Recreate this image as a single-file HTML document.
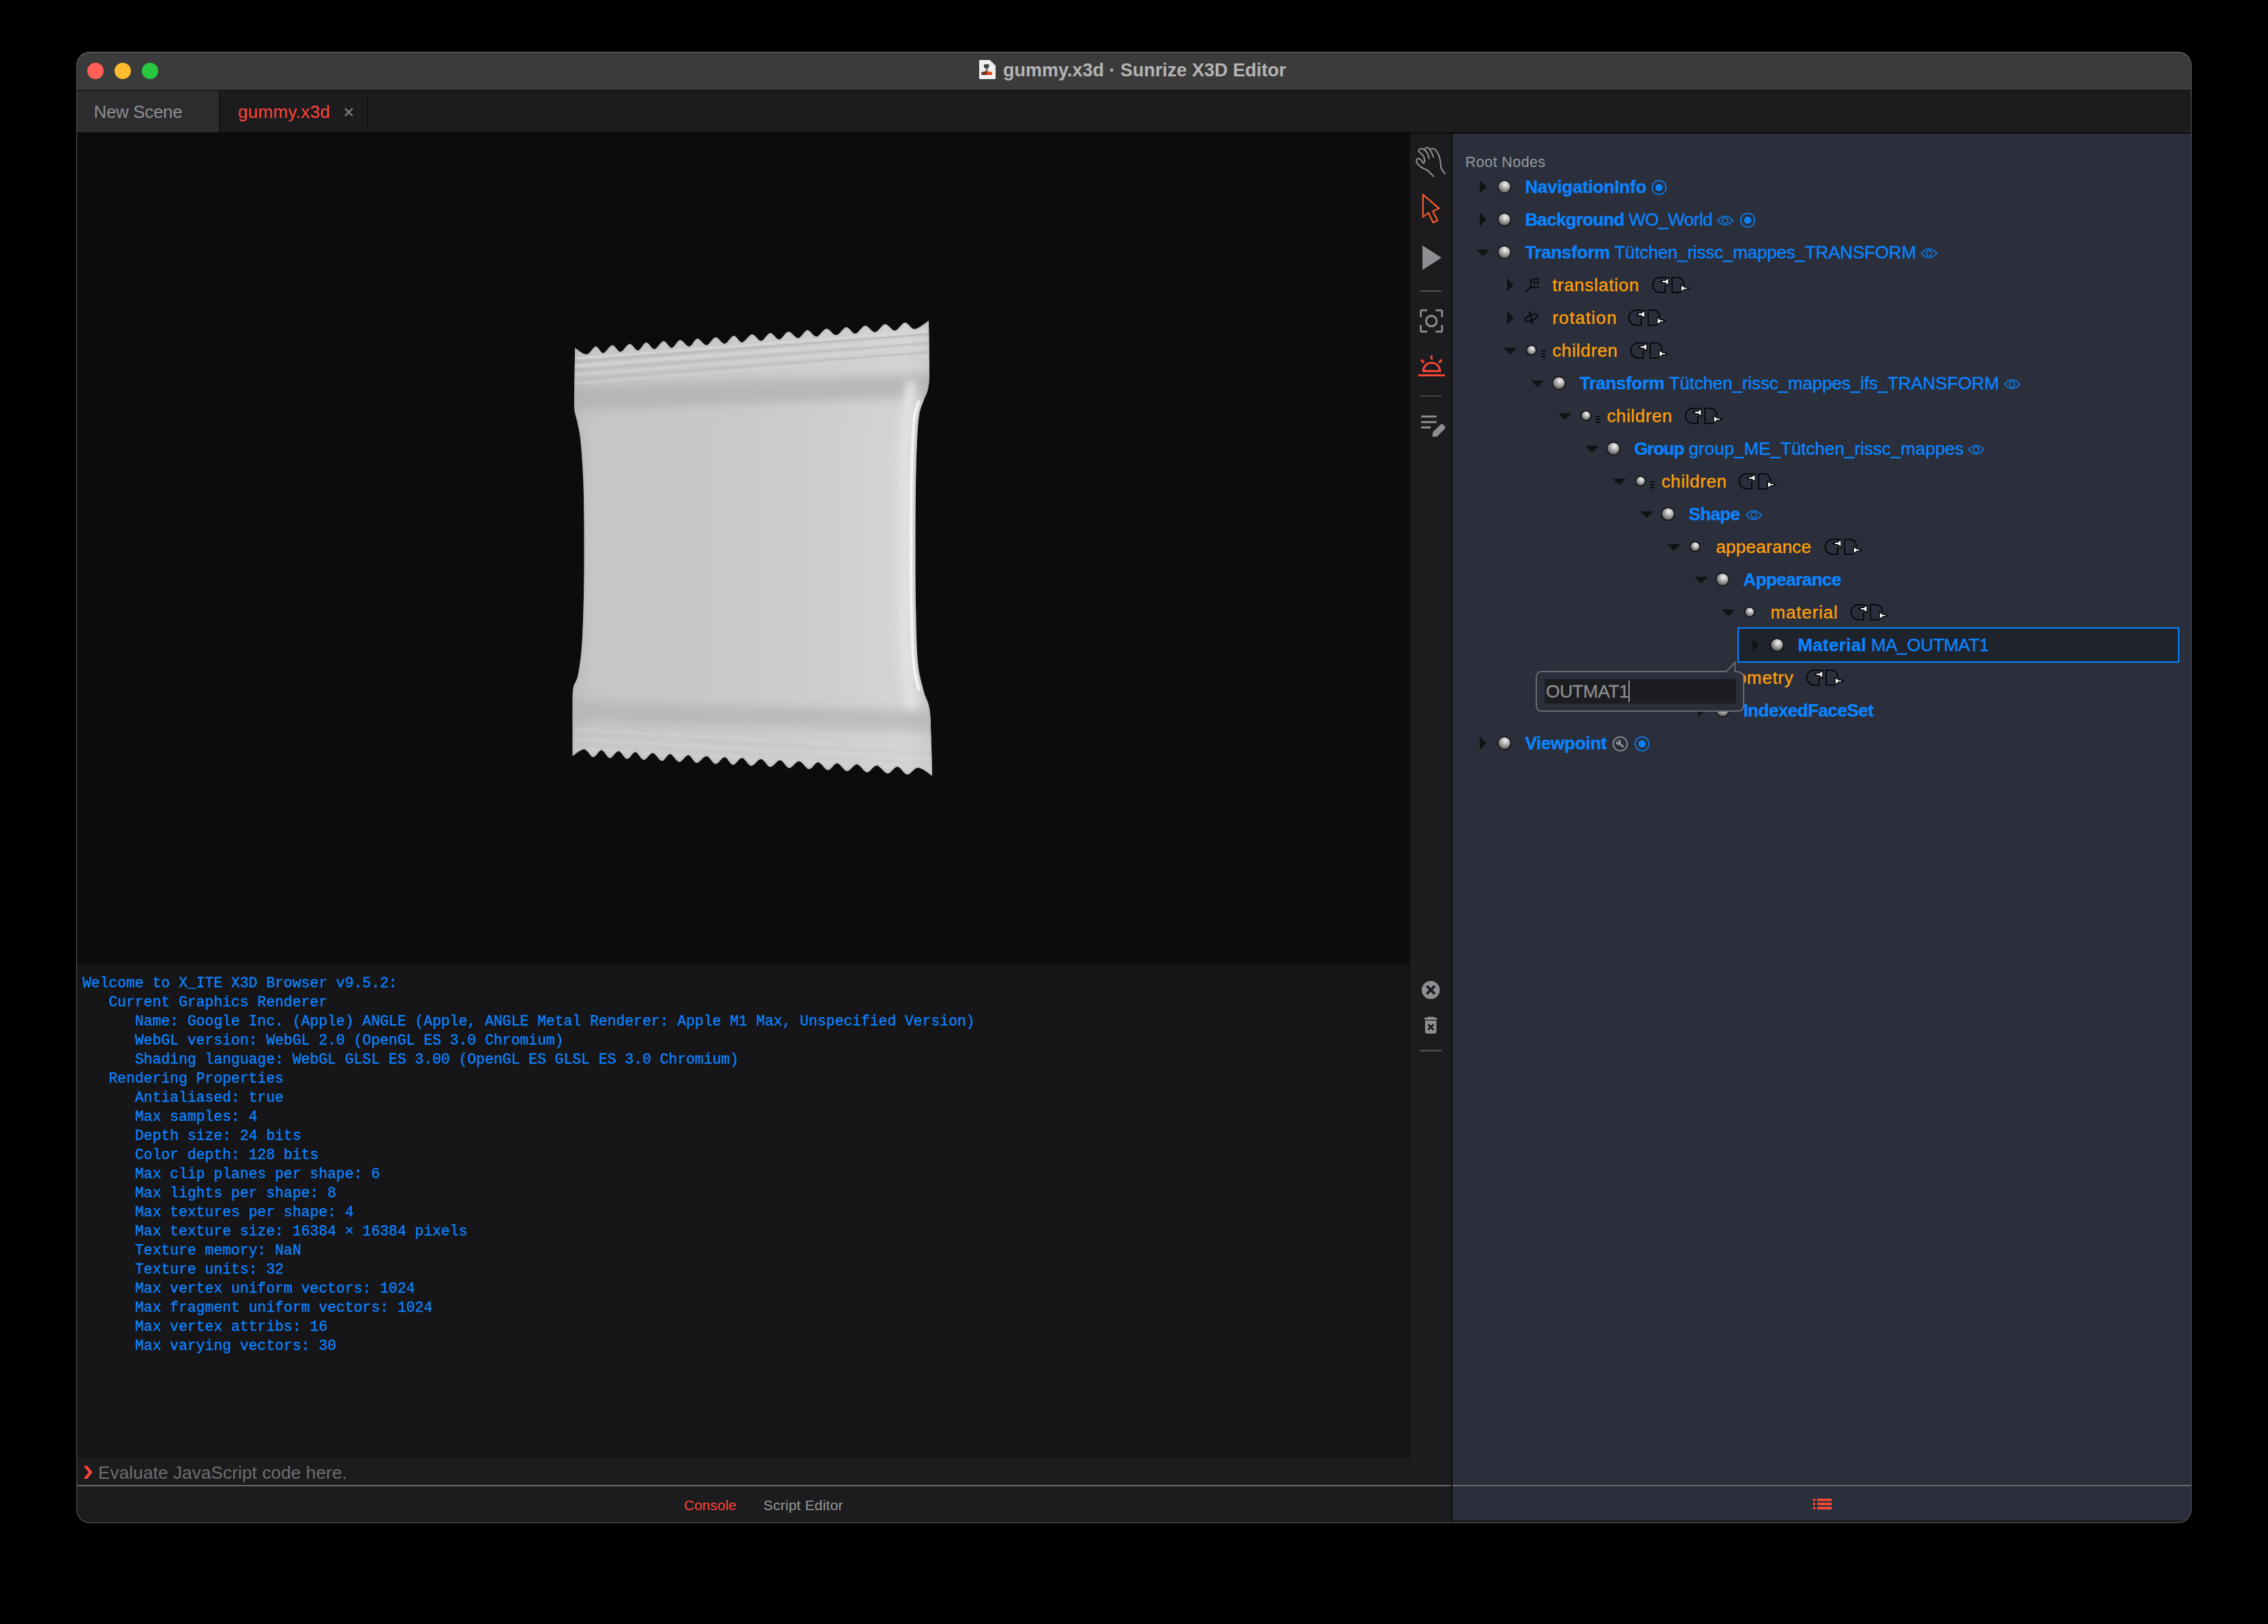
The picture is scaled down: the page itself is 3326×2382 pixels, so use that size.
<!DOCTYPE html><html><head><meta charset="utf-8"><style>
*{margin:0;padding:0;box-sizing:border-box}
html,body{width:3326px;height:2382px;background:#000;overflow:hidden}
body{position:relative;font-family:"Liberation Sans",sans-serif}
.a{position:absolute}
.t{position:absolute;white-space:pre;line-height:1;}
.row{position:absolute;height:48px;line-height:48px;white-space:pre;font-size:26px;-webkit-text-stroke:0.35px currentColor}
.b{font-weight:bold}
.mono{font-family:"Liberation Mono",monospace}
svg{position:absolute;overflow:visible}
</style></head><body><div class="a" style="left:112px;top:76px;width:3102px;height:2158px;border-radius:20px;background:#1c1c1e;overflow:hidden">
<div class="a" style="left:0;top:0;width:3102px;height:56px;background:#3b3b3b"></div>
<div class="a" style="left:0;top:56px;width:3102px;height:1px;background:#050505"></div>
<div class="a" style="left:16px;top:16px;width:24px;height:24px;border-radius:50%;background:#ff5f57"></div>
<div class="a" style="left:56px;top:16px;width:24px;height:24px;border-radius:50%;background:#febc2e"></div>
<div class="a" style="left:96px;top:16px;width:24px;height:24px;border-radius:50%;background:#28c840"></div>
<div class="t b" style="left:1359px;top:14px;font-size:27px;color:#b4b4b4;letter-spacing:0px">gummy.x3d · Sunrize X3D Editor</div>
<svg style="left:1324px;top:12px" width="24" height="28" viewBox="0 0 24 28">
<path d="M1.5 0 H15.6 L24 8.4 V26.5 Q24 28 22.5 28 H1.5 Q0 28 0 26.5 V1.5 Q0 0 1.5 0Z" fill="#f1f1f1"/>
<path d="M15.6 0 V8.4 H24Z" fill="#e6e6e6"/>
<path d="M7 7.2 Q7 6.2 8.5 6.2 H13 Q14.4 6.2 14.4 7.2 V11 L13 12 H8.3 L7 11Z" fill="#3c4141"/>
<rect x="9.2" y="11.5" width="3.8" height="5" fill="#8a8c84"/>
<path d="M3.2 17.7 L10.4 16.2 V21.9 H3.2Z" fill="#6a3420"/>
<path d="M10.4 16.2 L18.8 17.7 V21.9 H10.4Z" fill="#e2461c"/>
<rect x="10" y="16.2" width="0.8" height="5.7" fill="#3a2a20"/>
</svg>
<div class="a" style="left:0;top:57px;width:3102px;height:61px;background:#1c1c1e"></div>
<div class="a" style="left:0;top:57px;width:209px;height:61px;background:#2c2c2e"></div>
<div class="a" style="left:209px;top:57px;width:1px;height:61px;background:#0e0e0e"></div>
<div class="a" style="left:426px;top:57px;width:1px;height:61px;background:#0e0e0e"></div>
<div class="t" style="left:25.5px;top:74.5px;font-size:26px;color:#8e8e93;letter-spacing:-0.35px">New Scene</div>
<div class="t" style="left:237px;top:74.5px;font-size:26px;color:#ff453a;letter-spacing:0.3px">gummy.x3d</div>
<svg style="left:393px;top:82px" width="13" height="13" viewBox="0 0 13 13"><path d="M1 1L12 12M12 1L1 12" stroke="#7d7d7d" stroke-width="2.4"/></svg>
<div class="a" style="left:0;top:118px;width:3102px;height:2px;background:#0c0c0e"></div>
<div class="a" style="left:0;top:120px;width:1954px;height:1217px;background:#0c0c0c"></div>
<div class="a" style="left:0;top:1337px;width:1954px;height:1px;background:#1e1e20"></div>
<div class="a" style="left:0;top:1338px;width:1954px;height:2px;background:#0d0d0e"></div>
<div class="a" style="left:0;top:1340px;width:1954px;height:721px;background:#161618"></div>
<div class="a" style="left:1955px;top:120px;width:61px;height:1982px;background:#1c1c1e"></div>
<div class="a" style="left:1954px;top:120px;width:2px;height:1941px;background:#0f0f10"></div>
<div class="a" style="left:0;top:2060px;width:1955px;height:1px;background:#0f0f10"></div>
<div class="a" style="left:2016px;top:120px;width:2px;height:2036px;background:#0b0b0c"></div>
<div class="a" style="left:2018px;top:120px;width:1084px;height:2034px;background:#2a2f3b"></div>
<div class="a" style="left:0;top:2102px;width:2016px;height:2px;background:#6a6a6a"></div>
<div class="a" style="left:2018px;top:2102px;width:1084px;height:2px;background:#6a6a6a"></div>
<div class="t mono" style="left:9px;top:1351.5px;font-size:21.3px;line-height:28px;letter-spacing:0.05px;-webkit-text-stroke:0.3px currentColor;color:#0a84ff">Welcome to X_ITE X3D Browser v9.5.2:
   Current Graphics Renderer
      Name: Google Inc. (Apple) ANGLE (Apple, ANGLE Metal Renderer: Apple M1 Max, Unspecified Version)
      WebGL version: WebGL 2.0 (OpenGL ES 3.0 Chromium)
      Shading language: WebGL GLSL ES 3.00 (OpenGL ES GLSL ES 3.0 Chromium)
   Rendering Properties
      Antialiased: true
      Max samples: 4
      Depth size: 24 bits
      Color depth: 128 bits
      Max clip planes per shape: 6
      Max lights per shape: 8
      Max textures per shape: 4
      Max texture size: 16384 × 16384 pixels
      Texture memory: NaN
      Texture units: 32
      Max vertex uniform vectors: 1024
      Max fragment uniform vectors: 1024
      Max vertex attribs: 16
      Max varying vectors: 30</div>
<svg style="left:10px;top:2074px" width="14" height="19" viewBox="0 0 14 19"><path d="M0.5 0H6L13.5 9.5L6 19H0.5L8 9.5Z" fill="#ff453a"/></svg>
<div class="t" style="left:32px;top:2071px;font-size:26px;color:#6e6e70;letter-spacing:0.17px">Evaluate JavaScript code here.</div>
<div class="t" style="left:891px;top:2120.5px;font-size:21px;color:#ff453a">Console</div>
<div class="t" style="left:1007.5px;top:2120.5px;letter-spacing:0.2px;font-size:21px;color:#98989d">Script Editor</div>
<svg style="left:2546px;top:2122px" width="30" height="18" viewBox="0 0 30 18">
<g fill="#ff4a3a"><rect x="0.8" y="0.2" width="3.3" height="3.5"/><rect x="0.8" y="6.2" width="3.3" height="3.5"/><rect x="0.8" y="12.1" width="3.3" height="3.8"/>
<rect x="6.8" y="0.2" width="21.3" height="3.5"/><rect x="6.8" y="6.2" width="21.3" height="3.5"/><rect x="6.8" y="12.1" width="21.3" height="3.8"/></g></svg>
<svg style="left:688px;top:364px" width="600" height="720" viewBox="0 0 600 720">
<defs>
<linearGradient id="bagH" x1="0" y1="0" x2="1" y2="0">
<stop offset="0" stop-color="#bdbdbd"/><stop offset="0.06" stop-color="#c6c6c6"/><stop offset="0.45" stop-color="#c9c9c9"/>
<stop offset="0.8" stop-color="#d1d1d1"/><stop offset="0.93" stop-color="#d6d6d6"/><stop offset="1" stop-color="#c8c8c8"/>
</linearGradient>
<linearGradient id="bagV" x1="0" y1="0" x2="0" y2="1">
<stop offset="0" stop-color="#d4d4d4" stop-opacity="0.5"/><stop offset="0.15" stop-color="#c8c8c8" stop-opacity="0.1"/>
<stop offset="0.3" stop-color="#c4c4c4" stop-opacity="0"/>
<stop offset="0.8" stop-color="#c4c4c4" stop-opacity="0"/>
<stop offset="0.92" stop-color="#d0d0d0" stop-opacity="0.3"/><stop offset="1" stop-color="#d4d4d4" stop-opacity="0.5"/>
</linearGradient>
<filter id="bl1" x="-10%" y="-200%" width="120%" height="500%"><feGaussianBlur stdDeviation="0.7"/></filter>
<filter id="bl6" x="-10%" y="-100%" width="120%" height="300%"><feGaussianBlur stdDeviation="7"/></filter>
<filter id="blh" x="-200%" y="-10%" width="500%" height="120%"><feGaussianBlur stdDeviation="1"/></filter>
<filter id="blb" x="-200%" y="-10%" width="500%" height="120%"><feGaussianBlur stdDeviation="6"/></filter>
<clipPath id="bagclip"><path d="M43.3,70.6 C43.3,70.6 40.5,69.1 43.3,70.6 C46.2,72.1 55.3,80.2 60.3,79.8 C65.4,79.4 69.6,68.6 73.6,68.3 C77.7,67.9 80.5,78.2 84.6,77.9 C88.6,77.6 93.7,66.7 97.9,66.4 C102.1,66.1 105.8,76.3 110.0,76.0 C114.3,75.6 119.1,64.8 123.4,64.4 C127.6,64.1 131.4,74.3 135.5,74.0 C139.5,73.7 143.6,62.9 147.6,62.6 C151.6,62.2 155.5,72.4 159.7,72.1 C164.0,71.8 168.8,60.9 173.1,60.6 C177.3,60.3 181.1,70.5 185.2,70.2 C189.2,69.8 193.1,59.1 197.3,58.7 C201.6,58.4 206.4,68.5 210.6,68.2 C214.9,67.9 218.5,57.1 222.8,56.8 C227.0,56.4 231.7,66.6 236.1,66.2 C240.6,65.9 245.0,55.0 249.4,54.7 C253.9,54.4 258.3,64.5 262.8,64.2 C267.2,63.8 271.9,53.0 276.1,52.6 C280.4,52.3 283.8,62.6 288.2,62.2 C292.7,61.9 298.1,50.9 302.8,50.6 C307.4,50.2 311.7,60.4 316.1,60.1 C320.6,59.7 325.0,48.9 329.5,48.5 C333.9,48.2 338.4,58.3 342.8,58.0 C347.2,57.7 351.5,46.8 356.1,46.5 C360.8,46.1 366.0,56.2 370.7,55.9 C375.3,55.5 379.6,44.7 384.0,44.3 C388.5,44.0 392.7,54.2 397.4,53.8 C402.0,53.4 407.1,42.5 411.9,42.2 C416.8,41.8 421.6,51.9 426.5,51.6 C431.3,51.2 436.4,40.3 441.0,39.9 C445.7,39.6 449.7,49.8 454.3,49.4 C459.0,49.0 464.0,38.2 468.9,37.8 C473.7,37.4 478.6,47.5 483.4,47.2 C488.3,46.8 493.1,35.9 498.0,35.5 C502.8,35.2 507.7,45.3 512.5,44.9 C517.4,44.5 522.2,33.7 527.1,33.3 C531.9,32.9 535.8,43.1 541.6,42.7 C547.5,42.2 558.6,32.6 562.0,30.6 C562.2,43.0 563.2,88.3 563.0,105.0 C562.8,121.7 562.3,123.5 560.9,130.6 C559.5,137.7 556.6,141.3 554.5,147.7 C552.4,154.1 549.6,158.4 548.0,169.0 C546.4,179.6 545.5,193.8 544.7,211.5 C543.9,229.2 543.4,250.2 543.0,275.0 C542.6,299.8 542.5,331.6 542.5,360.0 C542.5,388.4 542.4,417.1 543.0,445.5 C543.6,473.9 544.1,509.4 546.0,530.6 C547.9,551.9 551.7,561.6 554.5,573.0 C557.3,584.4 561.2,587.5 563.0,598.7 C564.8,609.9 564.8,623.5 565.5,640.0 C566.2,656.5 566.8,688.3 567.0,698.0 C567.0,698.0 570.4,700.0 567.0,698.0 C563.6,696.0 552.5,686.4 546.5,686.1 C540.4,685.7 535.8,696.3 530.7,696.0 C525.7,695.7 521.0,684.7 516.2,684.4 C511.3,684.1 506.7,694.7 501.6,694.4 C496.6,694.1 490.9,683.0 485.9,682.7 C480.8,682.4 476.2,693.0 471.3,692.7 C466.5,692.4 461.6,681.4 456.8,681.1 C451.9,680.8 447.1,691.4 442.2,691.1 C437.4,690.8 432.3,679.7 427.7,679.5 C423.0,679.2 419.0,689.8 414.3,689.5 C409.7,689.3 404.4,678.2 399.8,677.9 C395.1,677.7 391.1,688.3 386.5,688.0 C381.8,687.7 376.8,676.7 371.9,676.4 C367.1,676.1 362.0,686.6 357.4,686.4 C352.7,686.1 348.7,675.1 344.0,674.9 C339.4,674.6 334.1,685.1 329.5,684.8 C324.8,684.6 320.8,673.6 316.1,673.3 C311.5,673.1 306.2,683.6 301.6,683.3 C296.9,683.0 292.7,672.0 288.2,671.8 C283.8,671.5 279.2,682.1 274.9,681.8 C270.7,681.6 267.0,670.6 262.8,670.4 C258.5,670.1 253.9,680.7 249.4,680.4 C245.0,680.2 240.8,669.1 236.1,668.9 C231.5,668.6 226.0,679.1 221.6,678.9 C217.1,678.6 213.7,667.6 209.4,667.4 C205.2,667.2 200.5,677.7 196.1,677.5 C191.7,677.2 187.0,666.2 182.8,665.9 C178.5,665.7 174.9,676.3 170.6,676.1 C166.4,675.8 161.7,664.8 157.3,664.5 C152.9,664.3 148.2,674.8 144.0,674.6 C139.7,674.3 135.9,663.3 131.8,663.1 C127.8,662.9 123.8,673.5 119.7,673.2 C115.6,673.0 111.4,662.0 107.1,661.7 C102.9,661.5 98.4,672.1 94.3,671.8 C90.1,671.6 86.2,660.6 82.1,660.3 C78.1,660.1 74.3,670.7 70.0,670.5 C65.8,670.2 61.7,659.2 56.7,658.9 C51.6,658.7 42.5,667.2 39.7,668.8 C39.7,657.5 39.6,617.5 39.7,601.0 C39.8,584.5 39.2,578.2 40.5,569.7 C41.8,561.2 45.4,561.1 47.6,550.0 C49.8,538.9 52.1,523.8 53.5,502.8 C54.9,481.8 55.7,450.3 56.2,424.0 C56.7,397.7 56.7,371.2 56.6,345.0 C56.5,318.8 56.2,289.4 55.4,266.5 C54.5,243.6 52.9,221.9 51.5,207.5 C50.1,193.1 48.3,187.9 46.8,180.0 C45.3,172.1 43.1,168.5 42.4,160.0 C41.7,151.5 42.2,143.6 42.4,128.7 C42.5,113.8 43.1,80.3 43.3,70.6Z"/></clipPath>
</defs>
<path d="M43.3,70.6 C43.3,70.6 40.5,69.1 43.3,70.6 C46.2,72.1 55.3,80.2 60.3,79.8 C65.4,79.4 69.6,68.6 73.6,68.3 C77.7,67.9 80.5,78.2 84.6,77.9 C88.6,77.6 93.7,66.7 97.9,66.4 C102.1,66.1 105.8,76.3 110.0,76.0 C114.3,75.6 119.1,64.8 123.4,64.4 C127.6,64.1 131.4,74.3 135.5,74.0 C139.5,73.7 143.6,62.9 147.6,62.6 C151.6,62.2 155.5,72.4 159.7,72.1 C164.0,71.8 168.8,60.9 173.1,60.6 C177.3,60.3 181.1,70.5 185.2,70.2 C189.2,69.8 193.1,59.1 197.3,58.7 C201.6,58.4 206.4,68.5 210.6,68.2 C214.9,67.9 218.5,57.1 222.8,56.8 C227.0,56.4 231.7,66.6 236.1,66.2 C240.6,65.9 245.0,55.0 249.4,54.7 C253.9,54.4 258.3,64.5 262.8,64.2 C267.2,63.8 271.9,53.0 276.1,52.6 C280.4,52.3 283.8,62.6 288.2,62.2 C292.7,61.9 298.1,50.9 302.8,50.6 C307.4,50.2 311.7,60.4 316.1,60.1 C320.6,59.7 325.0,48.9 329.5,48.5 C333.9,48.2 338.4,58.3 342.8,58.0 C347.2,57.7 351.5,46.8 356.1,46.5 C360.8,46.1 366.0,56.2 370.7,55.9 C375.3,55.5 379.6,44.7 384.0,44.3 C388.5,44.0 392.7,54.2 397.4,53.8 C402.0,53.4 407.1,42.5 411.9,42.2 C416.8,41.8 421.6,51.9 426.5,51.6 C431.3,51.2 436.4,40.3 441.0,39.9 C445.7,39.6 449.7,49.8 454.3,49.4 C459.0,49.0 464.0,38.2 468.9,37.8 C473.7,37.4 478.6,47.5 483.4,47.2 C488.3,46.8 493.1,35.9 498.0,35.5 C502.8,35.2 507.7,45.3 512.5,44.9 C517.4,44.5 522.2,33.7 527.1,33.3 C531.9,32.9 535.8,43.1 541.6,42.7 C547.5,42.2 558.6,32.6 562.0,30.6 C562.2,43.0 563.2,88.3 563.0,105.0 C562.8,121.7 562.3,123.5 560.9,130.6 C559.5,137.7 556.6,141.3 554.5,147.7 C552.4,154.1 549.6,158.4 548.0,169.0 C546.4,179.6 545.5,193.8 544.7,211.5 C543.9,229.2 543.4,250.2 543.0,275.0 C542.6,299.8 542.5,331.6 542.5,360.0 C542.5,388.4 542.4,417.1 543.0,445.5 C543.6,473.9 544.1,509.4 546.0,530.6 C547.9,551.9 551.7,561.6 554.5,573.0 C557.3,584.4 561.2,587.5 563.0,598.7 C564.8,609.9 564.8,623.5 565.5,640.0 C566.2,656.5 566.8,688.3 567.0,698.0 C567.0,698.0 570.4,700.0 567.0,698.0 C563.6,696.0 552.5,686.4 546.5,686.1 C540.4,685.7 535.8,696.3 530.7,696.0 C525.7,695.7 521.0,684.7 516.2,684.4 C511.3,684.1 506.7,694.7 501.6,694.4 C496.6,694.1 490.9,683.0 485.9,682.7 C480.8,682.4 476.2,693.0 471.3,692.7 C466.5,692.4 461.6,681.4 456.8,681.1 C451.9,680.8 447.1,691.4 442.2,691.1 C437.4,690.8 432.3,679.7 427.7,679.5 C423.0,679.2 419.0,689.8 414.3,689.5 C409.7,689.3 404.4,678.2 399.8,677.9 C395.1,677.7 391.1,688.3 386.5,688.0 C381.8,687.7 376.8,676.7 371.9,676.4 C367.1,676.1 362.0,686.6 357.4,686.4 C352.7,686.1 348.7,675.1 344.0,674.9 C339.4,674.6 334.1,685.1 329.5,684.8 C324.8,684.6 320.8,673.6 316.1,673.3 C311.5,673.1 306.2,683.6 301.6,683.3 C296.9,683.0 292.7,672.0 288.2,671.8 C283.8,671.5 279.2,682.1 274.9,681.8 C270.7,681.6 267.0,670.6 262.8,670.4 C258.5,670.1 253.9,680.7 249.4,680.4 C245.0,680.2 240.8,669.1 236.1,668.9 C231.5,668.6 226.0,679.1 221.6,678.9 C217.1,678.6 213.7,667.6 209.4,667.4 C205.2,667.2 200.5,677.7 196.1,677.5 C191.7,677.2 187.0,666.2 182.8,665.9 C178.5,665.7 174.9,676.3 170.6,676.1 C166.4,675.8 161.7,664.8 157.3,664.5 C152.9,664.3 148.2,674.8 144.0,674.6 C139.7,674.3 135.9,663.3 131.8,663.1 C127.8,662.9 123.8,673.5 119.7,673.2 C115.6,673.0 111.4,662.0 107.1,661.7 C102.9,661.5 98.4,672.1 94.3,671.8 C90.1,671.6 86.2,660.6 82.1,660.3 C78.1,660.1 74.3,670.7 70.0,670.5 C65.8,670.2 61.7,659.2 56.7,658.9 C51.6,658.7 42.5,667.2 39.7,668.8 C39.7,657.5 39.6,617.5 39.7,601.0 C39.8,584.5 39.2,578.2 40.5,569.7 C41.8,561.2 45.4,561.1 47.6,550.0 C49.8,538.9 52.1,523.8 53.5,502.8 C54.9,481.8 55.7,450.3 56.2,424.0 C56.7,397.7 56.7,371.2 56.6,345.0 C56.5,318.8 56.2,289.4 55.4,266.5 C54.5,243.6 52.9,221.9 51.5,207.5 C50.1,193.1 48.3,187.9 46.8,180.0 C45.3,172.1 43.1,168.5 42.4,160.0 C41.7,151.5 42.2,143.6 42.4,128.7 C42.5,113.8 43.1,80.3 43.3,70.6Z" fill="url(#bagH)"/>
<g clip-path="url(#bagclip)">
<rect x="0" y="0" width="600" height="720" fill="url(#bagV)"/>
<rect x="-50" y="84" width="700" height="3" fill="#dadada" opacity="0.7" transform="rotate(-4.41 43 84)" filter="url(#bl1)"/><rect x="-50" y="89" width="700" height="2.5" fill="#b4b4b4" opacity="0.7" transform="rotate(-4.41 43 89)" filter="url(#bl1)"/><rect x="-50" y="95" width="700" height="4" fill="#d8d8d8" opacity="0.7" transform="rotate(-4.41 43 95)" filter="url(#bl1)"/><rect x="-50" y="102" width="700" height="2.5" fill="#b6b6b6" opacity="0.65" transform="rotate(-4.41 43 102)" filter="url(#bl1)"/><rect x="-50" y="108" width="700" height="3" fill="#d6d6d6" opacity="0.7" transform="rotate(-4.41 43 108)" filter="url(#bl1)"/><rect x="-50" y="115" width="700" height="3" fill="#b8b8b8" opacity="0.6" transform="rotate(-4.41 43 115)" filter="url(#bl1)"/><rect x="-50" y="121" width="700" height="3" fill="#d4d4d4" opacity="0.6" transform="rotate(-4.41 43 121)" filter="url(#bl1)"/><rect x="-50" y="128" width="700" height="34" fill="#b2b2b2" opacity="0.8" transform="rotate(-2.20 43 128)" filter="url(#bl6)"/><rect x="-50" y="588" width="700" height="30" fill="#b4b4b4" opacity="0.7" transform="rotate(1.57 40 588)" filter="url(#bl6)"/><rect x="-50" y="628" width="700" height="3" fill="#d6d6d6" opacity="0.45" transform="rotate(3.15 40 628)" filter="url(#bl1)"/><rect x="-50" y="636" width="700" height="2" fill="#c0c0c0" opacity="0.4" transform="rotate(3.15 40 636)" filter="url(#bl1)"/><rect x="-50" y="643" width="700" height="3" fill="#d6d6d6" opacity="0.45" transform="rotate(3.15 40 643)" filter="url(#bl1)"/><rect x="-50" y="650" width="700" height="2" fill="#c2c2c2" opacity="0.35" transform="rotate(3.15 40 650)" filter="url(#bl1)"/><rect x="-50" y="657" width="700" height="3" fill="#d4d4d4" opacity="0.45" transform="rotate(3.15 40 657)" filter="url(#bl1)"/><rect x="-50" y="664" width="700" height="2" fill="#c4c4c4" opacity="0.35" transform="rotate(3.15 40 664)" filter="url(#bl1)"/>
<path d="M537.5,120.0 C536.4,128.2 532.6,153.8 531.0,169.0 C529.4,184.2 528.5,193.8 527.7,211.5 C526.9,229.2 526.4,250.2 526.0,275.0 C525.6,299.8 525.5,331.6 525.5,360.0 C525.5,388.4 525.4,417.1 526.0,445.5 C526.6,473.9 527.1,504.9 529.0,530.6 C530.9,556.4 536.1,588.4 537.5,600.0" fill="none" stroke="#e2e2e2" stroke-width="16" filter="url(#blb)"/>
<path d="M548.0,147.7 C546.9,151.3 543.1,158.4 541.5,169.0 C539.9,179.6 539.0,193.8 538.2,211.5 C537.4,229.2 536.9,250.2 536.5,275.0 C536.1,299.8 536.0,331.6 536.0,360.0 C536.0,388.4 535.9,417.1 536.5,445.5 C537.1,473.9 537.6,509.4 539.5,530.6 C541.4,551.9 546.6,565.9 548.0,573.0" fill="none" stroke="#ffffff" stroke-width="3.2" filter="url(#blh)"/>
<path d="M43.3,70.6 C43.3,70.6 40.5,69.1 43.3,70.6 C46.2,72.1 55.3,80.2 60.3,79.8 C65.4,79.4 69.6,68.6 73.6,68.3 C77.7,67.9 80.5,78.2 84.6,77.9 C88.6,77.6 93.7,66.7 97.9,66.4 C102.1,66.1 105.8,76.3 110.0,76.0 C114.3,75.6 119.1,64.8 123.4,64.4 C127.6,64.1 131.4,74.3 135.5,74.0 C139.5,73.7 143.6,62.9 147.6,62.6 C151.6,62.2 155.5,72.4 159.7,72.1 C164.0,71.8 168.8,60.9 173.1,60.6 C177.3,60.3 181.1,70.5 185.2,70.2 C189.2,69.8 193.1,59.1 197.3,58.7 C201.6,58.4 206.4,68.5 210.6,68.2 C214.9,67.9 218.5,57.1 222.8,56.8 C227.0,56.4 231.7,66.6 236.1,66.2 C240.6,65.9 245.0,55.0 249.4,54.7 C253.9,54.4 258.3,64.5 262.8,64.2 C267.2,63.8 271.9,53.0 276.1,52.6 C280.4,52.3 283.8,62.6 288.2,62.2 C292.7,61.9 298.1,50.9 302.8,50.6 C307.4,50.2 311.7,60.4 316.1,60.1 C320.6,59.7 325.0,48.9 329.5,48.5 C333.9,48.2 338.4,58.3 342.8,58.0 C347.2,57.7 351.5,46.8 356.1,46.5 C360.8,46.1 366.0,56.2 370.7,55.9 C375.3,55.5 379.6,44.7 384.0,44.3 C388.5,44.0 392.7,54.2 397.4,53.8 C402.0,53.4 407.1,42.5 411.9,42.2 C416.8,41.8 421.6,51.9 426.5,51.6 C431.3,51.2 436.4,40.3 441.0,39.9 C445.7,39.6 449.7,49.8 454.3,49.4 C459.0,49.0 464.0,38.2 468.9,37.8 C473.7,37.4 478.6,47.5 483.4,47.2 C488.3,46.8 493.1,35.9 498.0,35.5 C502.8,35.2 507.7,45.3 512.5,44.9 C517.4,44.5 522.2,33.7 527.1,33.3 C531.9,32.9 535.8,43.1 541.6,42.7 C547.5,42.2 558.6,32.6 562.0,30.6 C562.2,43.0 563.2,88.3 563.0,105.0 C562.8,121.7 562.3,123.5 560.9,130.6 C559.5,137.7 556.6,141.3 554.5,147.7 C552.4,154.1 549.6,158.4 548.0,169.0 C546.4,179.6 545.5,193.8 544.7,211.5 C543.9,229.2 543.4,250.2 543.0,275.0 C542.6,299.8 542.5,331.6 542.5,360.0 C542.5,388.4 542.4,417.1 543.0,445.5 C543.6,473.9 544.1,509.4 546.0,530.6 C547.9,551.9 551.7,561.6 554.5,573.0 C557.3,584.4 561.2,587.5 563.0,598.7 C564.8,609.9 564.8,623.5 565.5,640.0 C566.2,656.5 566.8,688.3 567.0,698.0 C567.0,698.0 570.4,700.0 567.0,698.0 C563.6,696.0 552.5,686.4 546.5,686.1 C540.4,685.7 535.8,696.3 530.7,696.0 C525.7,695.7 521.0,684.7 516.2,684.4 C511.3,684.1 506.7,694.7 501.6,694.4 C496.6,694.1 490.9,683.0 485.9,682.7 C480.8,682.4 476.2,693.0 471.3,692.7 C466.5,692.4 461.6,681.4 456.8,681.1 C451.9,680.8 447.1,691.4 442.2,691.1 C437.4,690.8 432.3,679.7 427.7,679.5 C423.0,679.2 419.0,689.8 414.3,689.5 C409.7,689.3 404.4,678.2 399.8,677.9 C395.1,677.7 391.1,688.3 386.5,688.0 C381.8,687.7 376.8,676.7 371.9,676.4 C367.1,676.1 362.0,686.6 357.4,686.4 C352.7,686.1 348.7,675.1 344.0,674.9 C339.4,674.6 334.1,685.1 329.5,684.8 C324.8,684.6 320.8,673.6 316.1,673.3 C311.5,673.1 306.2,683.6 301.6,683.3 C296.9,683.0 292.7,672.0 288.2,671.8 C283.8,671.5 279.2,682.1 274.9,681.8 C270.7,681.6 267.0,670.6 262.8,670.4 C258.5,670.1 253.9,680.7 249.4,680.4 C245.0,680.2 240.8,669.1 236.1,668.9 C231.5,668.6 226.0,679.1 221.6,678.9 C217.1,678.6 213.7,667.6 209.4,667.4 C205.2,667.2 200.5,677.7 196.1,677.5 C191.7,677.2 187.0,666.2 182.8,665.9 C178.5,665.7 174.9,676.3 170.6,676.1 C166.4,675.8 161.7,664.8 157.3,664.5 C152.9,664.3 148.2,674.8 144.0,674.6 C139.7,674.3 135.9,663.3 131.8,663.1 C127.8,662.9 123.8,673.5 119.7,673.2 C115.6,673.0 111.4,662.0 107.1,661.7 C102.9,661.5 98.4,672.1 94.3,671.8 C90.1,671.6 86.2,660.6 82.1,660.3 C78.1,660.1 74.3,670.7 70.0,670.5 C65.8,670.2 61.7,659.2 56.7,658.9 C51.6,658.7 42.5,667.2 39.7,668.8 C39.7,657.5 39.6,617.5 39.7,601.0 C39.8,584.5 39.2,578.2 40.5,569.7 C41.8,561.2 45.4,561.1 47.6,550.0 C49.8,538.9 52.1,523.8 53.5,502.8 C54.9,481.8 55.7,450.3 56.2,424.0 C56.7,397.7 56.7,371.2 56.6,345.0 C56.5,318.8 56.2,289.4 55.4,266.5 C54.5,243.6 52.9,221.9 51.5,207.5 C50.1,193.1 48.3,187.9 46.8,180.0 C45.3,172.1 43.1,168.5 42.4,160.0 C41.7,151.5 42.2,143.6 42.4,128.7 C42.5,113.8 43.1,80.3 43.3,70.6Z" fill="none" stroke="#a8a8a8" stroke-width="2.5" opacity="0.6" filter="url(#blh)"/>
</g>
</svg>
<svg style="left:1956px;top:124px" width="60" height="140" viewBox="0 0 696 1624">
<g fill="none" stroke="#8e8e90" stroke-width="24" stroke-linecap="round" stroke-linejoin="round">
<path d="M395,680 C340,620 310,585 270,565 C210,540 160,515 125,465 C95,425 100,385 135,378 C175,372 200,420 218,455 C248,465 250,400 232,345 C210,295 160,285 148,250 C140,212 190,200 225,218 C265,238 305,290 322,375"/>
<path d="M250,225 C255,195 285,180 310,198 C345,222 372,285 395,352"/>
<path d="M355,215 C385,200 425,218 455,262 C505,335 522,425 525,540 C545,575 570,605 592,638"/>
</g>
<path d="M218,992 L218,1368 L312,1302 L392,1468 L465,1433 L386,1274 L490,1225 Z" fill="none" stroke="#ff5b2e" stroke-width="25" stroke-linejoin="miter"/>
</svg>
<svg style="left:1956px;top:264px" width="60" height="100" viewBox="0 0 974 1624"><path d="M292,325 V910 L745,618Z" fill="#8e8e93"/><rect x="228" y="1395" width="517" height="35" fill="#505052"/></svg>
<svg style="left:1956px;top:364px" width="60" height="220" viewBox="0 0 443 1624">
<g fill="none" stroke="#8e8e93" stroke-width="20">
<path d="M115,185 V125 Q115,112 128,112 H185"/><path d="M275,112 H332 Q345,112 345,125 V185"/>
<path d="M115,270 V330 Q115,343 128,343 H185"/><path d="M275,343 H332 Q345,343 345,330 V270"/>
<circle cx="230" cy="228" r="57" stroke-width="22"/>
</g>
<g fill="none" stroke="#ff453a" stroke-width="22">
<path d="M142,770 A90,90 0 0 1 322,770 Z"/>
<path d="M88,815 H375"/><path d="M231,600 V645"/><path d="M118,647 L150,680"/><path d="M343,647 L311,680"/>
</g>
<rect x="103" y="1035" width="237" height="11" fill="#505052"/>
<g fill="none" stroke="#8e8e93" stroke-width="22"><path d="M118,1262 H285"/><path d="M118,1322 H285"/><path d="M118,1380 H222"/></g>
<path d="M245,1432 L325,1352 Q342,1336 360,1352 L372,1364 Q388,1382 372,1398 L292,1478 L240,1482 Z" fill="#8e8e93"/>
</svg>
<svg style="left:1928px;top:1304px" width="120" height="200" viewBox="0 0 974 1624">
<circle cx="472" cy="585" r="108" fill="#8e8e93"/>
<path d="M425,537 L520,632 M520,537 L425,632" stroke="#1c1c1e" stroke-width="30"/>
<rect x="397" y="915" width="153" height="25" rx="6" fill="#8e8e93"/>
<rect x="430" y="905" width="88" height="20" rx="8" fill="#8e8e93"/>
<path d="M405,950 H540 V1085 Q540,1105 520,1105 H425 Q405,1105 405,1085Z" fill="#8e8e93"/>
<path d="M440,995 L505,1060 M505,995 L440,1060" stroke="#1c1c1e" stroke-width="24"/>
<rect x="340" y="1298" width="260" height="20" fill="#505052"/>
</svg>
<div class="t" style="left:2036.6999999999998px;top:152px;font-size:21.5px;letter-spacing:0.45px;color:#98989d">Root Nodes</div>
<svg width="0" height="0" style="position:absolute"><defs>
<radialGradient id="sg" cx="0.58" cy="0.32" r="0.75" fx="0.58" fy="0.32">
<stop offset="0" stop-color="#f6f6f6"/><stop offset="0.3" stop-color="#c4c4c4"/><stop offset="0.7" stop-color="#7a7a7a"/><stop offset="1" stop-color="#3a3a3a"/></radialGradient>
</defs></svg>
<svg style="left:2058px;top:188px" width="10" height="20" viewBox="0 0 10 20"><path d="M0 0L10 10L0 20Z" fill="#111214"/></svg>
<svg style="left:2083.0px;top:187.0px" width="22" height="22" viewBox="0 0 22 22"><circle cx="11.0" cy="11.0" r="9.4" fill="url(#sg)" stroke="#050505" stroke-width="1.3"/></svg>
<div class="row" style="left:2124.4px;top:173.5px;color:#0a84ff"><span class="b" style="letter-spacing:-0.18px">NavigationInfo</span></div>
<svg style="left:2310.3px;top:188px" width="22" height="22" viewBox="0 0 22 22"><circle cx="11" cy="11" r="10.2" fill="none" stroke="#0a84ff" stroke-width="1.5"/><circle cx="11" cy="11" r="5.3" fill="#0a84ff"/></svg>
<svg style="left:2058px;top:236px" width="10" height="20" viewBox="0 0 10 20"><path d="M0 0L10 10L0 20Z" fill="#111214"/></svg>
<svg style="left:2083.0px;top:235.0px" width="22" height="22" viewBox="0 0 22 22"><circle cx="11.0" cy="11.0" r="9.4" fill="url(#sg)" stroke="#050505" stroke-width="1.3"/></svg>
<div class="row" style="left:2124.4px;top:221.5px;color:#0a84ff"><span class="b" style="letter-spacing:-0.62px">Background</span><span style="letter-spacing:-0.51px"> WO_World</span></div>
<svg style="left:2405.7000000000003px;top:238.5px" width="24" height="17" viewBox="0 0 24 17"><path d="M0.8 8.5 Q12 -4.5 23.2 8.5 Q12 21.5 0.8 8.5Z" fill="none" stroke="#0a84ff" stroke-width="1.5"/><circle cx="12" cy="8.5" r="3.9" fill="none" stroke="#0a84ff" stroke-width="1.5"/></svg>
<svg style="left:2439.7000000000003px;top:236px" width="22" height="22" viewBox="0 0 22 22"><circle cx="11" cy="11" r="10.2" fill="none" stroke="#0a84ff" stroke-width="1.5"/><circle cx="11" cy="11" r="5.3" fill="#0a84ff"/></svg>
<svg style="left:2052.5px;top:290px" width="19.5" height="10" viewBox="0 0 19.5 10"><path d="M0 0H19.5L9.75 10Z" fill="#111214"/></svg>
<svg style="left:2083.0px;top:283.0px" width="22" height="22" viewBox="0 0 22 22"><circle cx="11.0" cy="11.0" r="9.4" fill="url(#sg)" stroke="#050505" stroke-width="1.3"/></svg>
<div class="row" style="left:2124.4px;top:269.5px;color:#0a84ff"><span class="b" style="letter-spacing:-0.3px">Transform</span><span style="letter-spacing:-0.18px"> Tütchen_rissc_mappes_TRANSFORM</span></div>
<svg style="left:2705.3px;top:286.5px" width="24" height="17" viewBox="0 0 24 17"><path d="M0.8 8.5 Q12 -4.5 23.2 8.5 Q12 21.5 0.8 8.5Z" fill="none" stroke="#0a84ff" stroke-width="1.5"/><circle cx="12" cy="8.5" r="3.9" fill="none" stroke="#0a84ff" stroke-width="1.5"/></svg>
<svg style="left:2098px;top:332px" width="10" height="20" viewBox="0 0 10 20"><path d="M0 0L10 10L0 20Z" fill="#111214"/></svg>
<svg style="left:2123.5px;top:332px" width="22" height="22" viewBox="0 0 22 22"><g fill="none" stroke="#050505" stroke-width="1.6"><path d="M9 0V13.6H20.4"/><rect x="13.4" y="0.9" width="6.2" height="6.2"/><path d="M9 13.6L0.6 20"/></g></svg>
<div class="row" style="left:2164.4px;top:317.5px;color:#ff9f0a"><span style="letter-spacing:0.71px">translation</span></div>
<svg style="left:2287.9px;top:319px" width="100" height="45" viewBox="0 0 2268 1021"><g fill="none" stroke="#050608" stroke-width="40"><path d="M950,520 V772 H790 A255,252 0 0 1 790,268 H1010"/><path d="M1445,772 H1182 V268 H1380 A215,250 0 0 1 1580,530"/></g><g stroke="#050608" stroke-width="32" stroke-linejoin="miter"><path d="M755,408 H845"/><path d="M1695,630 H1785"/><path d="M1066,280 V535 L945,445 H845 V372 H945Z" fill="#fff"/><path d="M1478,512 V758 L1600,665 H1695 V595 H1600Z" fill="#fff"/></g></svg>
<svg style="left:2098px;top:380px" width="10" height="20" viewBox="0 0 10 20"><path d="M0 0L10 10L0 20Z" fill="#111214"/></svg>
<svg style="left:2123px;top:380px" width="22" height="22" viewBox="0 0 22 22"><g fill="none" stroke="#050505" stroke-width="1.7"><ellipse cx="10.5" cy="10" rx="10" ry="4" transform="rotate(-22 10.5 10)"/><path d="M7.4 0.4L13 19.6"/></g></svg>
<div class="row" style="left:2164.4px;top:365.5px;color:#ff9f0a"><span style="letter-spacing:1.07px">rotation</span></div>
<svg style="left:2253.2999999999997px;top:367px" width="100" height="45" viewBox="0 0 2268 1021"><g fill="none" stroke="#050608" stroke-width="40"><path d="M950,520 V772 H790 A255,252 0 0 1 790,268 H1010"/><path d="M1445,772 H1182 V268 H1380 A215,250 0 0 1 1580,530"/></g><g stroke="#050608" stroke-width="32" stroke-linejoin="miter"><path d="M755,408 H845"/><path d="M1695,630 H1785"/><path d="M1066,280 V535 L945,445 H845 V372 H945Z" fill="#fff"/><path d="M1478,512 V758 L1600,665 H1695 V595 H1600Z" fill="#fff"/></g></svg>
<svg style="left:2092.5px;top:434px" width="19.5" height="10" viewBox="0 0 19.5 10"><path d="M0 0H19.5L9.75 10Z" fill="#111214"/></svg>
<svg style="left:2125.25px;top:429.25px" width="17.5" height="17.5" viewBox="0 0 17.5 17.5"><circle cx="8.75" cy="8.75" r="7.15" fill="url(#sg)" stroke="#050505" stroke-width="1.3"/></svg>
<svg style="left:2148px;top:438px" width="7" height="11" viewBox="0 0 7 11"><g fill="#050505"><rect x="0" y="0" width="6.5" height="1.6"/><rect x="0" y="4.3" width="6.5" height="1.6"/><rect x="0" y="8.4" width="6.5" height="1.8"/></g></svg>
<div class="row" style="left:2164.4px;top:413.5px;color:#ff9f0a"><span style="letter-spacing:0.66px">children</span></div>
<svg style="left:2255.5px;top:415px" width="100" height="45" viewBox="0 0 2268 1021"><g fill="none" stroke="#050608" stroke-width="40"><path d="M950,520 V772 H790 A255,252 0 0 1 790,268 H1010"/><path d="M1445,772 H1182 V268 H1380 A215,250 0 0 1 1580,530"/></g><g stroke="#050608" stroke-width="32" stroke-linejoin="miter"><path d="M755,408 H845"/><path d="M1695,630 H1785"/><path d="M1066,280 V535 L945,445 H845 V372 H945Z" fill="#fff"/><path d="M1478,512 V758 L1600,665 H1695 V595 H1600Z" fill="#fff"/></g></svg>
<svg style="left:2132.5px;top:482px" width="19.5" height="10" viewBox="0 0 19.5 10"><path d="M0 0H19.5L9.75 10Z" fill="#111214"/></svg>
<svg style="left:2163.0px;top:475.0px" width="22" height="22" viewBox="0 0 22 22"><circle cx="11.0" cy="11.0" r="9.4" fill="url(#sg)" stroke="#050505" stroke-width="1.3"/></svg>
<div class="row" style="left:2204.4px;top:461.5px;color:#0a84ff"><span class="b" style="letter-spacing:-0.3px">Transform</span><span style="letter-spacing:-0.13px"> Tütchen_rissc_mappes_ifs_TRANSFORM</span></div>
<svg style="left:2826.7000000000003px;top:478.5px" width="24" height="17" viewBox="0 0 24 17"><path d="M0.8 8.5 Q12 -4.5 23.2 8.5 Q12 21.5 0.8 8.5Z" fill="none" stroke="#0a84ff" stroke-width="1.5"/><circle cx="12" cy="8.5" r="3.9" fill="none" stroke="#0a84ff" stroke-width="1.5"/></svg>
<svg style="left:2172.5px;top:530px" width="19.5" height="10" viewBox="0 0 19.5 10"><path d="M0 0H19.5L9.75 10Z" fill="#111214"/></svg>
<svg style="left:2205.25px;top:525.25px" width="17.5" height="17.5" viewBox="0 0 17.5 17.5"><circle cx="8.75" cy="8.75" r="7.15" fill="url(#sg)" stroke="#050505" stroke-width="1.3"/></svg>
<svg style="left:2228px;top:534px" width="7" height="11" viewBox="0 0 7 11"><g fill="#050505"><rect x="0" y="0" width="6.5" height="1.6"/><rect x="0" y="4.3" width="6.5" height="1.6"/><rect x="0" y="8.4" width="6.5" height="1.8"/></g></svg>
<div class="row" style="left:2244.4px;top:509.5px;color:#ff9f0a"><span style="letter-spacing:0.66px">children</span></div>
<svg style="left:2335.5px;top:511px" width="100" height="45" viewBox="0 0 2268 1021"><g fill="none" stroke="#050608" stroke-width="40"><path d="M950,520 V772 H790 A255,252 0 0 1 790,268 H1010"/><path d="M1445,772 H1182 V268 H1380 A215,250 0 0 1 1580,530"/></g><g stroke="#050608" stroke-width="32" stroke-linejoin="miter"><path d="M755,408 H845"/><path d="M1695,630 H1785"/><path d="M1066,280 V535 L945,445 H845 V372 H945Z" fill="#fff"/><path d="M1478,512 V758 L1600,665 H1695 V595 H1600Z" fill="#fff"/></g></svg>
<svg style="left:2212.5px;top:578px" width="19.5" height="10" viewBox="0 0 19.5 10"><path d="M0 0H19.5L9.75 10Z" fill="#111214"/></svg>
<svg style="left:2243.0px;top:571.0px" width="22" height="22" viewBox="0 0 22 22"><circle cx="11.0" cy="11.0" r="9.4" fill="url(#sg)" stroke="#050505" stroke-width="1.3"/></svg>
<div class="row" style="left:2284.4px;top:557.5px;color:#0a84ff"><span class="b" style="letter-spacing:-1.0px">Group</span><span style="letter-spacing:0px"> group_ME_Tütchen_rissc_mappes</span></div>
<svg style="left:2774.1000000000004px;top:574.5px" width="24" height="17" viewBox="0 0 24 17"><path d="M0.8 8.5 Q12 -4.5 23.2 8.5 Q12 21.5 0.8 8.5Z" fill="none" stroke="#0a84ff" stroke-width="1.5"/><circle cx="12" cy="8.5" r="3.9" fill="none" stroke="#0a84ff" stroke-width="1.5"/></svg>
<svg style="left:2252.5px;top:626px" width="19.5" height="10" viewBox="0 0 19.5 10"><path d="M0 0H19.5L9.75 10Z" fill="#111214"/></svg>
<svg style="left:2285.25px;top:621.25px" width="17.5" height="17.5" viewBox="0 0 17.5 17.5"><circle cx="8.75" cy="8.75" r="7.15" fill="url(#sg)" stroke="#050505" stroke-width="1.3"/></svg>
<svg style="left:2308px;top:630px" width="7" height="11" viewBox="0 0 7 11"><g fill="#050505"><rect x="0" y="0" width="6.5" height="1.6"/><rect x="0" y="4.3" width="6.5" height="1.6"/><rect x="0" y="8.4" width="6.5" height="1.8"/></g></svg>
<div class="row" style="left:2324.4px;top:605.5px;color:#ff9f0a"><span style="letter-spacing:0.66px">children</span></div>
<svg style="left:2415.2999999999997px;top:607px" width="100" height="45" viewBox="0 0 2268 1021"><g fill="none" stroke="#050608" stroke-width="40"><path d="M950,520 V772 H790 A255,252 0 0 1 790,268 H1010"/><path d="M1445,772 H1182 V268 H1380 A215,250 0 0 1 1580,530"/></g><g stroke="#050608" stroke-width="32" stroke-linejoin="miter"><path d="M755,408 H845"/><path d="M1695,630 H1785"/><path d="M1066,280 V535 L945,445 H845 V372 H945Z" fill="#fff"/><path d="M1478,512 V758 L1600,665 H1695 V595 H1600Z" fill="#fff"/></g></svg>
<svg style="left:2292.5px;top:674px" width="19.5" height="10" viewBox="0 0 19.5 10"><path d="M0 0H19.5L9.75 10Z" fill="#111214"/></svg>
<svg style="left:2323.0px;top:667.0px" width="22" height="22" viewBox="0 0 22 22"><circle cx="11.0" cy="11.0" r="9.4" fill="url(#sg)" stroke="#050505" stroke-width="1.3"/></svg>
<div class="row" style="left:2364.4px;top:653.5px;color:#0a84ff"><span class="b" style="letter-spacing:-0.6px">Shape</span></div>
<svg style="left:2448.1000000000004px;top:670.5px" width="24" height="17" viewBox="0 0 24 17"><path d="M0.8 8.5 Q12 -4.5 23.2 8.5 Q12 21.5 0.8 8.5Z" fill="none" stroke="#0a84ff" stroke-width="1.5"/><circle cx="12" cy="8.5" r="3.9" fill="none" stroke="#0a84ff" stroke-width="1.5"/></svg>
<svg style="left:2332.5px;top:722px" width="19.5" height="10" viewBox="0 0 19.5 10"><path d="M0 0H19.5L9.75 10Z" fill="#111214"/></svg>
<svg style="left:2365.25px;top:717.25px" width="17.5" height="17.5" viewBox="0 0 17.5 17.5"><circle cx="8.75" cy="8.75" r="7.15" fill="url(#sg)" stroke="#050505" stroke-width="1.3"/></svg>
<div class="row" style="left:2404.4px;top:701.5px;color:#ff9f0a"><span style="letter-spacing:0.26px">appearance</span></div>
<svg style="left:2540.6px;top:703px" width="100" height="45" viewBox="0 0 2268 1021"><g fill="none" stroke="#050608" stroke-width="40"><path d="M950,520 V772 H790 A255,252 0 0 1 790,268 H1010"/><path d="M1445,772 H1182 V268 H1380 A215,250 0 0 1 1580,530"/></g><g stroke="#050608" stroke-width="32" stroke-linejoin="miter"><path d="M755,408 H845"/><path d="M1695,630 H1785"/><path d="M1066,280 V535 L945,445 H845 V372 H945Z" fill="#fff"/><path d="M1478,512 V758 L1600,665 H1695 V595 H1600Z" fill="#fff"/></g></svg>
<svg style="left:2372.5px;top:770px" width="19.5" height="10" viewBox="0 0 19.5 10"><path d="M0 0H19.5L9.75 10Z" fill="#111214"/></svg>
<svg style="left:2403.0px;top:763.0px" width="22" height="22" viewBox="0 0 22 22"><circle cx="11.0" cy="11.0" r="9.4" fill="url(#sg)" stroke="#050505" stroke-width="1.3"/></svg>
<div class="row" style="left:2444.4px;top:749.5px;color:#0a84ff"><span class="b" style="letter-spacing:-0.53px">Appearance</span></div>
<svg style="left:2412.5px;top:818px" width="19.5" height="10" viewBox="0 0 19.5 10"><path d="M0 0H19.5L9.75 10Z" fill="#111214"/></svg>
<svg style="left:2445.25px;top:813.25px" width="17.5" height="17.5" viewBox="0 0 17.5 17.5"><circle cx="8.75" cy="8.75" r="7.15" fill="url(#sg)" stroke="#050505" stroke-width="1.3"/></svg>
<div class="row" style="left:2484.4px;top:797.5px;color:#ff9f0a"><span style="letter-spacing:0.86px">material</span></div>
<svg style="left:2578.5px;top:799px" width="100" height="45" viewBox="0 0 2268 1021"><g fill="none" stroke="#050608" stroke-width="40"><path d="M950,520 V772 H790 A255,252 0 0 1 790,268 H1010"/><path d="M1445,772 H1182 V268 H1380 A215,250 0 0 1 1580,530"/></g><g stroke="#050608" stroke-width="32" stroke-linejoin="miter"><path d="M755,408 H845"/><path d="M1695,630 H1785"/><path d="M1066,280 V535 L945,445 H845 V372 H945Z" fill="#fff"/><path d="M1478,512 V758 L1600,665 H1695 V595 H1600Z" fill="#fff"/></g></svg>
<div class="a" style="left:2436px;top:844px;width:648px;height:52px;background:#1f232b;border:2px solid #0a84ff"></div>
<svg style="left:2458px;top:860px" width="10" height="20" viewBox="0 0 10 20"><path d="M0 0L10 10L0 20Z" fill="#111214"/></svg>
<svg style="left:2483.0px;top:859.0px" width="22" height="22" viewBox="0 0 22 22"><circle cx="11.0" cy="11.0" r="9.4" fill="url(#sg)" stroke="#050505" stroke-width="1.3"/></svg>
<div class="row" style="left:2524.4px;top:845.5px;color:#0a84ff"><span class="b" style="letter-spacing:0.3px">Material</span><span style="letter-spacing:-0.31px"> MA_OUTMAT1</span></div>
<svg style="left:2332.5px;top:914px" width="19.5" height="10" viewBox="0 0 19.5 10"><path d="M0 0H19.5L9.75 10Z" fill="#111214"/></svg>
<svg style="left:2365.25px;top:909.25px" width="17.5" height="17.5" viewBox="0 0 17.5 17.5"><circle cx="8.75" cy="8.75" r="7.15" fill="url(#sg)" stroke="#050505" stroke-width="1.3"/></svg>
<div class="row" style="left:2404.4px;top:893.5px;color:#ff9f0a"><span style="letter-spacing:0.7px">geometry</span></div>
<svg style="left:2513.9px;top:895px" width="100" height="45" viewBox="0 0 2268 1021"><g fill="none" stroke="#050608" stroke-width="40"><path d="M950,520 V772 H790 A255,252 0 0 1 790,268 H1010"/><path d="M1445,772 H1182 V268 H1380 A215,250 0 0 1 1580,530"/></g><g stroke="#050608" stroke-width="32" stroke-linejoin="miter"><path d="M755,408 H845"/><path d="M1695,630 H1785"/><path d="M1066,280 V535 L945,445 H845 V372 H945Z" fill="#fff"/><path d="M1478,512 V758 L1600,665 H1695 V595 H1600Z" fill="#fff"/></g></svg>
<svg style="left:2378px;top:956px" width="10" height="20" viewBox="0 0 10 20"><path d="M0 0L10 10L0 20Z" fill="#111214"/></svg>
<svg style="left:2403.0px;top:955.0px" width="22" height="22" viewBox="0 0 22 22"><circle cx="11.0" cy="11.0" r="9.4" fill="url(#sg)" stroke="#050505" stroke-width="1.3"/></svg>
<div class="row" style="left:2444.4px;top:941.5px;color:#0a84ff"><span class="b" style="letter-spacing:-0.49px">IndexedFaceSet</span></div>
<svg style="left:2058px;top:1004px" width="10" height="20" viewBox="0 0 10 20"><path d="M0 0L10 10L0 20Z" fill="#111214"/></svg>
<svg style="left:2083.0px;top:1003.0px" width="22" height="22" viewBox="0 0 22 22"><circle cx="11.0" cy="11.0" r="9.4" fill="url(#sg)" stroke="#050505" stroke-width="1.3"/></svg>
<div class="row" style="left:2124.4px;top:989.5px;color:#0a84ff"><span class="b" style="letter-spacing:-0.28px">Viewpoint</span></div>
<svg style="left:2253px;top:1004px" width="22" height="22" viewBox="0 0 22 22"><circle cx="11" cy="11" r="10.3" fill="none" stroke="#9a9a9e" stroke-width="1.6"/><circle cx="8.4" cy="8.8" r="3.6" fill="#9a9a9e"/><path d="M9.2 10 L15.2 14.9" stroke="#9a9a9e" stroke-width="2.6" stroke-linecap="round"/><path d="M8.3 8.4 L5.2 5.6" stroke="#2a2f3b" stroke-width="2.1" stroke-linecap="round"/></svg>
<svg style="left:2285px;top:1004px" width="22" height="22" viewBox="0 0 22 22"><circle cx="11" cy="11" r="10.2" fill="none" stroke="#0a84ff" stroke-width="1.5"/><circle cx="11" cy="11" r="5.3" fill="#0a84ff"/></svg>
<svg style="left:2140px;top:893px" width="308" height="77" viewBox="0 0 308 77"><path d="M9 16 H279.5 L292.3 2.5 V16 Q305 16 305 25 V65 Q305 74 296 74 H9 Q1 74 1 65 V25 Q1 16 9 16Z" fill="#2a2f3b" stroke="#6b6b6d" stroke-width="2"/></svg>
<div class="a" style="left:2153px;top:920px;width:281px;height:36px;background:#1c1d21"></div>
<div class="t" style="left:2155px;top:924.5px;font-size:26.5px;letter-spacing:-0.45px;-webkit-text-stroke:0.3px currentColor;color:#8e8e90">OUTMAT1</div>
<div class="a" style="left:2276px;top:922px;width:1.6px;height:32px;background:#8e8e90"></div>
</div>
<div class="a" style="left:112px;top:76px;width:3102px;height:2158px;border-radius:20px;border:1.5px solid #5a5a5a;border-top-color:#727272"></div></body></html>
